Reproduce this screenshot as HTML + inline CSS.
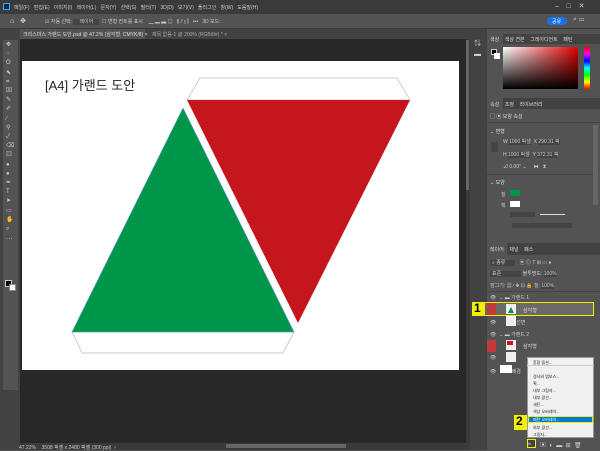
<!DOCTYPE html><html><head><meta charset="utf-8"><style>
*{margin:0;padding:0;box-sizing:border-box}
body{width:600px;height:450px;background:#535353;position:relative;overflow:hidden;font-family:"Liberation Sans","Noto Sans CJK KR",sans-serif;font-size:5px;color:#ddd}
.a{position:absolute}
.t{position:absolute;white-space:nowrap}
</style></head><body>
<div class="a" style="left:0;top:0;width:600px;height:14px;background:#3a3a3a"></div>
<div class="a" style="left:3px;top:3px;width:7px;height:7px;background:#0b2a4d;border:1px solid #31a8ff"></div>
<div class="t" style="left:14px;top:4px;font-size:5px;color:#ccc">메일(F) &nbsp; 편집(E) &nbsp; 이미지(I) &nbsp; 레이어(L) &nbsp; 문자(Y) &nbsp; 선택(S) &nbsp; 필터(T) &nbsp; 3D(D) &nbsp; 보기(V) &nbsp; 플러그인 &nbsp; 창(W) &nbsp; 도움말(H)</div>
<div class="t" style="left:555px;top:2px;font-size:7px;color:#ccc">–&nbsp;&nbsp;&nbsp;&nbsp;□&nbsp;&nbsp;&nbsp;&nbsp;✕</div>
<div class="a" style="left:0;top:14px;width:600px;height:15px;background:#535353;border-bottom:1px solid #3a3a3a"></div>
<div class="t" style="left:10px;top:17px;font-size:7px;color:#ddd">⌂ &nbsp; ✥</div>
<div class="t" style="left:45px;top:18px;color:#ccc">☑ 자동 선택: <span style="background:#444;padding:0 6px">레이어</span> &nbsp;☐ 변형 컨트롤 표시 &nbsp;&nbsp; ▁ ▂ ▃ ▤ &nbsp; ⫼ ⫽ ⫾ ⫿ &nbsp; ••• &nbsp; 3D 모드:</div>
<div class="a" style="left:547px;top:17px;width:20px;height:8px;border-radius:4px;background:#1473e6"></div>
<div class="t" style="left:552px;top:18px;color:#fff">공유</div>
<div class="t" style="left:573px;top:16px;font-size:7px;color:#ccc">⌕ ▭</div>
<div class="a" style="left:0;top:29px;width:470px;height:10px;background:#424242"></div>
<div class="a" style="left:20px;top:29px;width:125px;height:10px;background:#535353"></div>
<div class="t" style="left:23px;top:31px;color:#ddd">크리스마스 가랜드 도안.psd @ 47.2% (삼각형, CMYK/8) ×</div>
<div class="t" style="left:152px;top:31px;color:#aaa">제목 없음-1 @ 200% (RGB/8#) * ×</div>
<div class="a" style="left:0;top:29px;width:20px;height:421px;background:#424242"></div>
<div class="a" style="left:3px;top:40px;width:15px;height:350px;background:#535353"></div>
<div class="t" style="left:6px;top:41px;font-size:6px;line-height:9.2px;color:#ccc;white-space:pre">✥
◌
ʘ
⬉
⌗
⊠
✎
✐
∕
⚲
✓
⌫
▥
●
●
✒
T
➤
▭
✋
⌕
⋯</div>
<div class="a" style="left:5px;top:280px;width:7px;height:7px;background:#000;border:1px solid #ccc"></div>
<div class="a" style="left:9px;top:284px;width:7px;height:7px;background:#fff;border:1px solid #888"></div>
<div class="a" style="left:20px;top:39px;width:446px;height:404px;background:#282828"></div>
<div class="a" style="left:22px;top:61px;width:437px;height:309px;background:#fff"></div>
<div class="t" style="left:45px;top:75px;font-size:13px;color:#222">[A4] 가랜드 도안</div>
<svg class="a" style="left:0;top:0" width="600" height="450">
<polygon points="200,78 397,78 410,100 187,100" fill="#fff" stroke="#ccc" stroke-width="1"/>
<polygon points="187,100 410,100 298,323" fill="#c4161c"/>
<polygon points="72,332 294,332 283,353 82,353" fill="#fff" stroke="#ccc" stroke-width="1"/>
<polygon points="183,108 294,332 72,332" fill="#00964a" stroke="#5b9bd5" stroke-width="0.6"/>
</svg>
<div class="a" style="left:20px;top:443px;width:450px;height:7px;background:#3a3a3a"></div>
<div class="t" style="left:19px;top:444px;color:#ccc">47.22% &nbsp;&nbsp; 3508 픽셀 x 2480 픽셀 (300 ppi) &nbsp;›</div>
<div class="a" style="left:226px;top:444px;width:120px;height:4px;background:#666"></div>
<div class="a" style="left:466px;top:39px;width:4px;height:404px;background:#3a3a3a"></div>
<div class="a" style="left:466px;top:40px;width:3px;height:150px;background:#666"></div>
<div class="a" style="left:470px;top:29px;width:17px;height:421px;background:#424242"></div>
<div class="t" style="left:474px;top:38px;font-size:7px;line-height:11px;color:#ccc;white-space:pre">⇅
▬</div>
<div class="a" style="left:487px;top:29px;width:113px;height:421px;background:#535353"></div>
<div class="a" style="left:487px;top:34px;width:113px;height:10px;background:#424242"></div>
<div class="a" style="left:487px;top:34px;width:16px;height:10px;background:#535353"></div>
<div class="t" style="left:490px;top:36px;color:#ddd">색상 &nbsp;&nbsp; 색상 견본 &nbsp;&nbsp; 그레이디언트 &nbsp;&nbsp; 패턴</div>
<div class="a" style="left:491px;top:49px;width:6px;height:6px;background:#000;border:1px solid #ccc"></div>
<div class="a" style="left:494px;top:53px;width:6px;height:6px;background:#fff"></div>
<div class="a" style="left:503px;top:47px;width:75px;height:42px;background:linear-gradient(to bottom,rgba(0,0,0,0),#000),linear-gradient(to right,#fff,#e00000)"></div>
<div class="a" style="left:584px;top:47px;width:6px;height:42px;background:linear-gradient(#f00,#f0f,#00f,#0ff,#0f0,#ff0,#f00)"></div>
<div class="a" style="left:487px;top:98px;width:113px;height:11px;background:#424242"></div>
<div class="a" style="left:487px;top:98px;width:16px;height:11px;background:#535353"></div>
<div class="t" style="left:490px;top:101px;color:#ddd">속성 &nbsp;&nbsp; 조정 &nbsp;&nbsp; 라이브러리</div>
<div class="t" style="left:490px;top:113px;color:#ddd">▢ ▣ 모양 속성</div>
<div class="a" style="left:487px;top:122px;width:113px;height:1px;background:#444"></div>
<div class="t" style="left:490px;top:128px;color:#ddd">⌄ 변형</div>
<div class="a" style="left:491px;top:142px;width:7px;height:10px;background:#444"></div>
<div class="t" style="left:503px;top:138px;color:#ccc">W <span style="background:#444">1000 픽셀</span> &nbsp;X <span style="background:#444">290.31 픽</span></div>
<div class="t" style="left:503px;top:151px;color:#ccc">H <span style="background:#444">1000 픽셀</span> &nbsp;Y <span style="background:#444">372.31 픽</span></div>
<div class="t" style="left:503px;top:163px;color:#ccc">⊿ 0.00° ⌄ &nbsp;&nbsp;&nbsp; ⧓ &nbsp; ⧗</div>
<div class="a" style="left:487px;top:174px;width:108px;height:1px;background:#444"></div>
<div class="t" style="left:490px;top:179px;color:#ddd">⌄ 모양</div>
<div class="a" style="left:510px;top:190px;width:10px;height:6px;background:#00964a"></div>
<div class="a" style="left:510px;top:201px;width:10px;height:6px;background:#fff"></div>
<div class="t" style="left:501px;top:191px;color:#ccc">칠</div><div class="t" style="left:501px;top:202px;color:#ccc">획</div>
<div class="a" style="left:510px;top:212px;width:25px;height:5px;background:#444"></div>
<div class="a" style="left:540px;top:214px;width:25px;height:1px;background:#ddd"></div>
<div class="a" style="left:512px;top:223px;width:60px;height:5px;background:#444"></div>
<div class="a" style="left:593px;top:125px;width:5px;height:80px;background:#666"></div>
<div class="a" style="left:487px;top:243px;width:113px;height:12px;background:#424242"></div>
<div class="a" style="left:487px;top:243px;width:20px;height:12px;background:#535353"></div>
<div class="t" style="left:490px;top:246px;color:#ddd">레이어 &nbsp;&nbsp; 채널 &nbsp;&nbsp; 패스</div>
<div class="t" style="left:490px;top:259px;color:#ccc"><span style="background:#444;padding:0 10px 0 2px">⌕ 종류</span> &nbsp; ▣ ◎ T ⊞ ▭ ●</div>
<div class="t" style="left:490px;top:270px;color:#ccc"><span style="background:#444;padding:0 20px 0 2px">표준</span> 불투명도: <span style="background:#444">100%</span></div>
<div class="t" style="left:490px;top:282px;color:#ccc">잠그기: ▦ ∕ ✥ ⊡ 🔒 칠: <span style="background:#444">100%</span></div>
<div class="a" style="left:487px;top:291px;width:113px;height:1px;background:#444"></div>
<div class="t" style="left:490px;top:294px;color:#ccc">👁 &nbsp;⌄ ▬ 가랜드 1</div>
<div class="a" style="left:484px;top:302px;width:110px;height:14px;background:#6a6a6a;border:1px solid #f0f000"></div>
<div class="a" style="left:487px;top:303px;width:9px;height:12px;background:#c0393b"></div>
<div class="a" style="left:506px;top:304px;width:10px;height:10px;background:#eee"></div>
<div class="a" style="left:508px;top:307px;border-left:3px solid transparent;border-right:3px solid transparent;border-bottom:6px solid #00964a"></div>
<div class="t" style="left:523px;top:307px;color:#ddd">삼각형</div>
<div class="a" style="left:472px;top:302px;width:12px;height:14px;background:#f0f000"></div>
<div class="t" style="left:474px;top:301px;font-size:12px;font-weight:bold;color:#000">1</div>
<div class="t" style="left:490px;top:319px;color:#ccc">👁 &nbsp;&nbsp;&nbsp;&nbsp;&nbsp;&nbsp;&nbsp;&nbsp;&nbsp; 점선면</div>
<div class="a" style="left:506px;top:316px;width:10px;height:10px;background:#eee"></div>
<div class="t" style="left:490px;top:331px;color:#ccc">👁 &nbsp;⌄ ▬ 가랜드 2</div>
<div class="a" style="left:487px;top:340px;width:9px;height:12px;background:#c0393b"></div>
<div class="a" style="left:506px;top:340px;width:10px;height:10px;background:#eee"></div>
<div class="a" style="left:507px;top:341px;width:6px;height:4px;background:#c4161c"></div>
<div class="t" style="left:523px;top:343px;color:#ddd">삼각형</div>
<div class="a" style="left:506px;top:352px;width:10px;height:10px;background:#eee"></div>
<div class="t" style="left:490px;top:355px;color:#ccc">👁</div>
<div class="a" style="left:500px;top:365px;width:12px;height:8px;background:#fff"></div>
<div class="t" style="left:490px;top:368px;color:#ccc">👁 &nbsp;&nbsp;&nbsp;&nbsp;&nbsp;&nbsp;&nbsp;&nbsp;&nbsp; 배경</div>
<div class="a" style="left:527px;top:357px;width:67px;height:81px;background:#f0f0f0;border:1px solid #999"></div>
<div class="t" style="left:533px;top:359px;font-size:4px;line-height:7px;color:#222;white-space:pre">혼합 옵션...

경사와 엠보스...
획...
내부 그림자...
내부 광선...
새틴...
색상 오버레이...
그레이디언트 오버레이...</div>
<div class="a" style="left:527px;top:365px;width:67px;height:1px;background:#ccc"></div>
<div class="a" style="left:528px;top:416px;width:65px;height:7px;background:#0078d7;border:1px solid #f0f000"></div>
<div class="t" style="left:533px;top:417px;font-size:4px;color:#fff">패턴 오버레이...</div>
<div class="t" style="left:533px;top:424px;font-size:4px;line-height:7px;color:#222;white-space:pre">외부 광선...
그림자...</div>
<div class="a" style="left:514px;top:415px;width:13px;height:15px;background:#f0f000"></div>
<div class="t" style="left:516px;top:414px;font-size:12px;font-weight:bold;color:#000">2</div>
<div class="a" style="left:527px;top:439px;width:9px;height:9px;border:1px solid #f0f000;background:#444"></div>
<div class="t" style="left:528px;top:441px;font-size:4px;color:#ddd">fx</div>
<div class="t" style="left:540px;top:440px;font-size:6px;color:#ccc">▣ &nbsp;◐ &nbsp;▬ &nbsp;⊞ &nbsp;🗑</div>
</body></html>
